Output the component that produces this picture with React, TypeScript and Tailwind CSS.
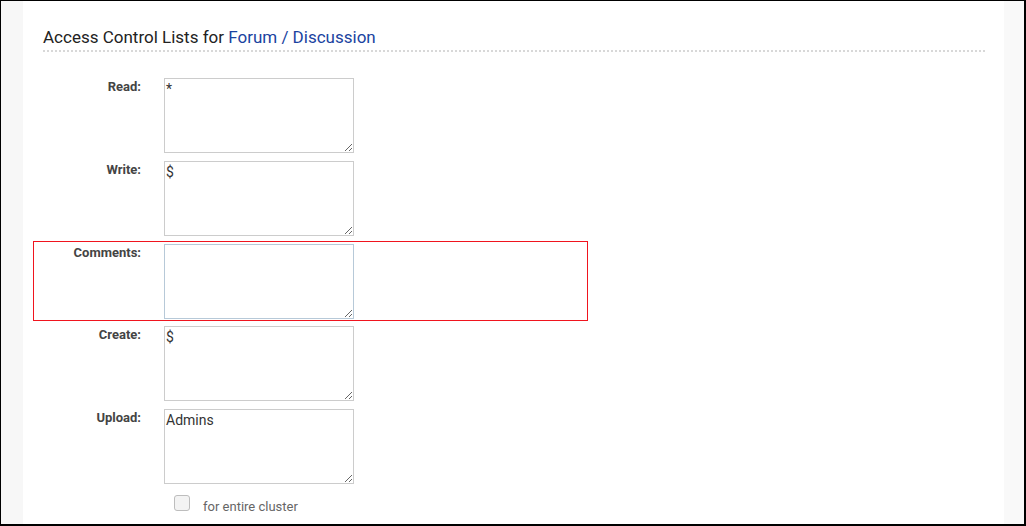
import React from 'react';

const rows = [
  { label: 'Read:', value: '*' },
  { label: 'Write:', value: '$' },
  { label: 'Comments:', value: '', highlight: true },
  { label: 'Create:', value: '$' },
  { label: 'Upload:', value: 'Admins' },
];

function AclRow({ label, value, highlight }: { label: string; value: string; highlight?: boolean }) {
  return (
    <div
      className={`flex w-[555px] border pt-[2px] pb-[1px] ${highlight ? 'border-[#f0141e]' : 'border-transparent'}`}
    >
      <label className="w-[107px] shrink-0 text-right text-[13px] leading-[18px] font-bold text-[#444]">
        {label}
      </label>
      <textarea
        defaultValue={value}
        className={`ml-[23px] h-[75px] w-[190px] resize-y border p-[1px] text-[14px] leading-[18px] text-[#333] outline-none ${
          highlight ? 'border-[#b7c9d8]' : 'border-[#cccccc]'
        }`}
        style={{ fontFamily: 'Roboto, "Liberation Sans", sans-serif' }}
      />
    </div>
  );
}

export default function App() {
  return (
    <div
      className="flex h-[526px] w-[1026px] overflow-hidden border-t border-l border-r-2 border-b-2 border-black bg-white"
      style={{ fontFamily: 'Roboto, "Liberation Sans", sans-serif' }}
    >
      <div className="w-[22px] shrink-0 bg-[#f7f7f7]" />
      <div className="flex-1 pl-[20px] pr-[19px] pt-[25px]">
        <h2 className="border-b-2 border-dotted border-[#d8d8d8] pb-[1px] text-[17px] leading-[23px] font-normal text-[#222]">
          Access Control Lists for <a className="text-[#1a43a0]">Forum / Discussion</a>
        </h2>
        <div className="ml-[-10px] mt-[23px] flex flex-col gap-[2.75px]">
          {rows.map((r) => (
            <AclRow key={r.label} {...r} />
          ))}
        </div>
        <div className="ml-[131px] mt-[9px] flex items-start gap-[13px]">
          <span className="block h-[16px] w-[16px] rounded-[3px] border border-[#bdbdbd] bg-[#f3f3f3]" />
          <span className="mt-[4px] text-[13px] leading-[16px] text-[#666]">for entire cluster</span>
        </div>
      </div>
      <div className="w-[20px] shrink-0 bg-[#f9f9f9]" />
    </div>
  );
}
